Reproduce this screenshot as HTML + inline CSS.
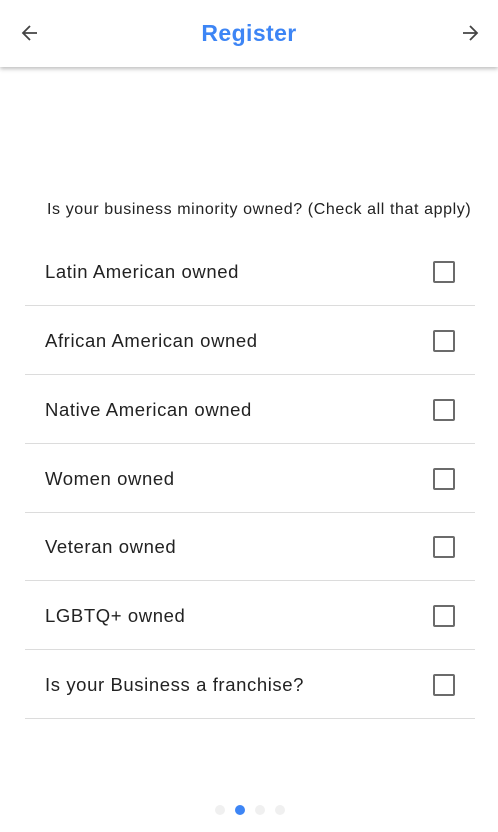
<!DOCTYPE html>
<html><head><style>
body{margin:0;width:498px;height:832px;background:#fff;font-family:"Liberation Sans",sans-serif;position:relative;overflow:hidden}
.hdr{position:absolute;left:0;top:0;width:498px;height:67px;background:#fff;box-shadow:0 2px 4px rgba(0,0,0,.25)}
.title{position:absolute;left:0;right:0;top:20px;text-align:center;color:#3d85f5;font-weight:bold;font-size:23px;letter-spacing:0.4px}
.q{position:absolute;left:47px;top:201px;font-size:16px;color:#222;letter-spacing:0.6px}
.row{position:absolute;left:25px;width:450px;height:68px;border-bottom:1px solid #dcdcdc}
.row span{position:absolute;left:20px;top:24px;font-size:18.5px;color:#222;letter-spacing:0.6px}
.cb{position:absolute;left:408px;top:24px;width:18px;height:18px;border:2px solid #6b6b6b;border-radius:2px}
.dot{position:absolute;top:805px;width:10px;height:10px;border-radius:50%;background:#f0f0f0}
</style></head><body>
<div class="hdr">
<svg style="position:absolute;left:20px;top:23px" width="20" height="20" viewBox="0 0 20 20"><path d="M17 10H3M10 3L3 10l7 7" fill="none" stroke="#444" stroke-width="1.8"/></svg>
<div class="title">Register</div>
<svg style="position:absolute;left:460px;top:23px" width="20" height="20" viewBox="0 0 20 20"><path d="M3 10h14M10 3l7 7-7 7" fill="none" stroke="#444" stroke-width="1.8"/></svg>
</div>
<div class="q">Is your business minority owned? (Check all that apply)</div>
<div class="row" style="top:237px"><span>Latin American owned</span><div class="cb"></div></div>
<div class="row" style="top:306px"><span>African American owned</span><div class="cb"></div></div>
<div class="row" style="top:375px"><span>Native American owned</span><div class="cb"></div></div>
<div class="row" style="top:444px"><span>Women owned</span><div class="cb"></div></div>
<div class="row" style="top:512px"><span>Veteran owned</span><div class="cb"></div></div>
<div class="row" style="top:581px"><span>LGBTQ+ owned</span><div class="cb"></div></div>
<div class="row" style="top:650px"><span>Is your Business a franchise?</span><div class="cb"></div></div>
<div class="dot" style="left:215px"></div>
<div class="dot" style="left:235px;background:#3d85f5"></div>
<div class="dot" style="left:255px"></div>
<div class="dot" style="left:275px"></div>
</body></html>
